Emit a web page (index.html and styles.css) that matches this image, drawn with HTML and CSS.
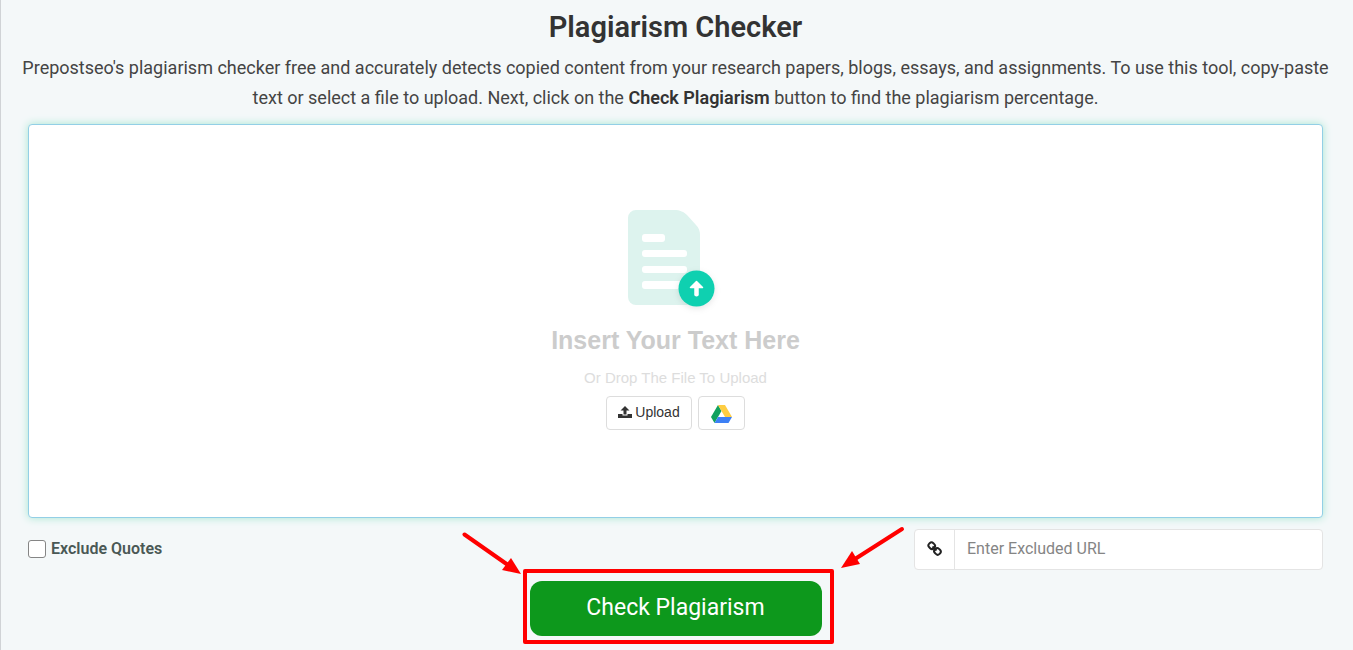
FILE: index.html
```html
<!DOCTYPE html>
<html lang="en">
<head>
<meta charset="utf-8">
<meta name="viewport" content="width=device-width, initial-scale=1">
<title>Plagiarism Checker</title>
<link rel="stylesheet" href="styles.css">
</head>
<body>
<main class="page">
  <header class="intro">
    <h1 class="title">Plagiarism Checker</h1>
    <p class="lead">Prepostseo's plagiarism checker free and accurately detects copied content from your research papers, blogs, essays, and assignments. To use this tool, copy-paste text or select a file to upload. Next, click on the <strong>Check Plagiarism</strong> button to find the plagiarism percentage.</p>
  </header>
  <form class="checker">
    <div class="editor">
      <textarea class="editor-text" aria-label="Insert your text here"></textarea>
      <div class="drop">
        <svg class="drop-icon" width="110" height="106" viewBox="0 0 110 106" aria-hidden="true">
          <path d="M16 2h38c6 0 10 2 13 5l9 10c3 3 4 6 4 10v62a8 8 0 0 1-8 8H16a8 8 0 0 1-8-8V10a8 8 0 0 1 8-8z" fill="#ddf3ee"/>
          <g fill="#fff">
            <rect x="22" y="26" width="23" height="8" rx="3"/>
            <rect x="22" y="42" width="45" height="7" rx="3"/>
            <rect x="22" y="58" width="45" height="7" rx="3"/>
            <rect x="22" y="73" width="45" height="8" rx="3"/>
          </g>
          <circle class="drop-badge" cx="76.500" cy="80.500" r="18" fill="#0fd0b0"/>
          <path d="M76.500 73.500l6 6h-4.500V87q-1.500 1.500-3 0v-7.500h-4.500z" fill="#fff" stroke="#fff" stroke-width="1.500" stroke-linejoin="round"/>
        </svg>
        <h2 class="drop-title">Insert Your Text Here</h2>
        <p class="drop-note">Or Drop The File To Upload</p>
        <div class="drop-actions">
          <button class="btn" type="button">
            <svg width="14" height="14" viewBox="0 0 14 14" aria-hidden="true"><path d="M7 1l4.500 4.500H8.500V9.500h-3V5.500H2.500zM0 9h4.500v1.500h5V9H14v4H0z" fill="#333"/></svg>
            Upload
          </button>
          <button class="btn btn-drive" type="button" aria-label="Google Drive">
            <svg width="21" height="18" viewBox="0 0 21 18" aria-hidden="true">
              <path d="M7 0L0 12l3.500 6L10.500 6z" fill="#11a15e"/>
              <path d="M7 0h7l7 12h-7z" fill="#fecd42"/>
              <path d="M7 12h14l-3.500 6h-14z" fill="#3d80f5"/>
            </svg>
          </button>
        </div>
      </div>
    </div>
    <div class="options">
      <label class="quotes"><input class="quotes-box" type="checkbox">Exclude Quotes</label>
      <div class="url">
        <label class="url-icon" for="url" aria-label="Excluded URL">
          <svg width="15" height="15" viewBox="0 0 15 15" fill="none" stroke="#222" stroke-width="2" aria-hidden="true">
            <rect x="1.500" y="1.800" width="6.500" height="5.800" rx="2.600" transform="rotate(45 4.750 4.700)"/><rect x="7.200" y="7.500" width="6.500" height="5.800" rx="2.600" transform="rotate(45 10.450 10.400)"/><path d="M5.500 5.500l4 4"/>
          </svg>
        </label>
        <input class="url-input" id="url" type="text" placeholder="Enter Excluded URL">
      </div>
    </div>
    <div class="submit">
      <div class="target">
        <button class="check" type="submit">Check Plagiarism</button>
        <div class="highlight" aria-hidden="true">
          <svg class="arrow arrow-left" width="62" height="46" viewBox="0 0 62 46"><path d="M3.500 7.500L47 38" stroke="#f00" stroke-width="4" stroke-linecap="round"/><path d="M50 31l10 16-19-4z" fill="#f00"/></svg>
          <svg class="arrow arrow-right" width="68" height="46" viewBox="0 0 68 46"><path d="M64 2L17 32" stroke="#f00" stroke-width="4" stroke-linecap="round"/><path d="M14 24L3 41l19-4z" fill="#f00"/></svg>
        </div>
      </div>
    </div>
  </form>
</main>
</body>
</html>
```
FILE: styles.css
```css
* { box-sizing: border-box; }

body {
  margin: 0;
  background: #f4f8f9;
  color: #444;
  font-family: Roboto, "Liberation Sans", sans-serif;
}

.page {
  min-height: 100vh;
  padding: 9px 21px 14px 18px;
  border-left: 1px solid #d0d3d6;
}

.intro { text-align: center; }

.title {
  margin: 0 0 8px;
  color: #333;
  font-size: 29px;
  font-weight: 600;
  line-height: 36px;
}

.lead {
  margin: 0;
  font-size: 18px;
  line-height: 30px;
}

.lead strong {
  color: #333;
  font-weight: 600;
}

.checker { padding: 11px 9px 0; }

.editor {
  display: grid;
  border: 1px solid #93cfe6;
  border-radius: 4px;
  background: #fff;
  box-shadow: 0 0 8px #a5e6d2;
}

.editor-text,
.drop { grid-area: 1 / 1; }

.editor-text {
  width: 100%;
  padding: 12px;
  border: 0;
  border-radius: 4px;
  outline: 0;
  resize: none;
  background: transparent;
  font: 16px Roboto, sans-serif;
}

.drop {
  display: flex;
  flex-direction: column;
  align-items: center;
  justify-self: center;
  padding: 83px 0 87px;
  font-family: "Liberation Sans", Arial, sans-serif;
}

.drop-icon { overflow: visible; }

.drop-badge { filter: drop-shadow(0 2px 3px rgba(0, 0, 0, 0.1)); }

.drop-title {
  margin: 10px 0 0;
  color: #ccc;
  font-size: 25px;
  font-weight: 700;
  line-height: 32px;
}

.drop-note {
  margin: 12px 0 8px;
  color: #ddd;
  font-size: 15px;
  line-height: 20px;
}

.drop-actions {
  display: flex;
  gap: 6px;
}

.btn {
  display: flex;
  align-items: center;
  gap: 3px;
  height: 34px;
  padding: 0 11px 2px;
  border: 1px solid #ddd;
  border-radius: 4px;
  background: #fff;
  color: #333;
  font: 14px "Liberation Sans", Arial, sans-serif;
}

.btn-drive { padding: 1px 12px 0; }

.options {
  display: flex;
  justify-content: space-between;
  margin-top: 11px;
}

.quotes {
  display: flex;
  align-items: center;
  gap: 5px;
  height: 39px;
  color: #4a5855;
  font-size: 16px;
  font-weight: 600;
}

.quotes-box {
  width: 18px;
  height: 18px;
  margin: 0;
  border: 1px solid #858585;
  border-radius: 3px;
  background: #fff;
  appearance: none;
}

.quotes-box:checked { background: #0d981c; }

.url {
  display: flex;
  flex: 0 1 409px;
  height: 41px;
  border: 1px solid #e4e4e4;
  border-radius: 4px;
  background: #fff;
}

.url-icon {
  display: flex;
  align-items: center;
  justify-content: center;
  width: 40px;
  padding-bottom: 3px;
  border-right: 1px solid #e4e4e4;
}

.url-input {
  flex: 1;
  min-width: 0;
  padding: 0 12px 2px;
  border: 0;
  outline: 0;
  background: transparent;
  font: 16px Roboto, sans-serif;
}

.url-input::placeholder { color: #858585; }

.submit {
  display: flex;
  justify-content: center;
  margin-top: 11px;
}

.target { position: relative; }

.check {
  display: block;
  width: 292px;
  height: 55px;
  padding: 0 0 3px;
  border: 0;
  border-radius: 12px;
  background: #0d981c;
  color: #fff;
  font: 23px Roboto, sans-serif;
}

.highlight {
  position: absolute;
  inset: -12px -12px -8px -7px;
  border: 4px solid #f00;
  border-radius: 2px;
  pointer-events: none;
}

.arrow {
  position: absolute;
  bottom: 100%;
  overflow: visible;
}

.arrow-left { right: calc(100% + 4px); }

.arrow-right { left: calc(100% + 8px); }
```
